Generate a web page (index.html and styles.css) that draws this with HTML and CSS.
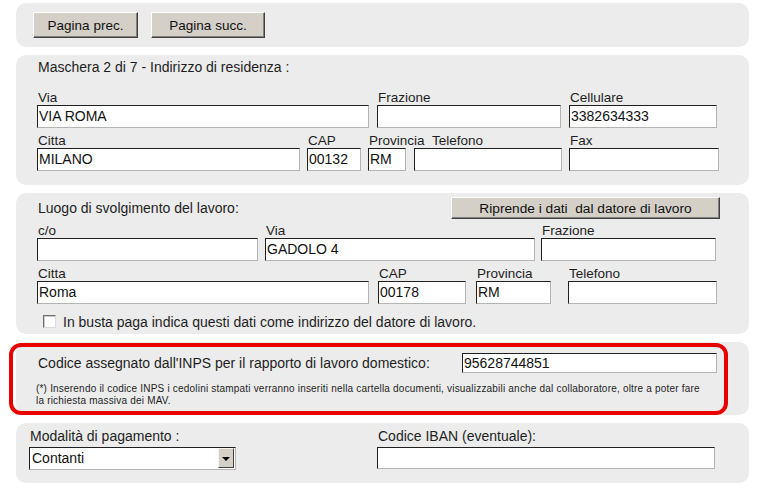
FILE: index.html
```
<!DOCTYPE html>
<html lang="it">
<head>
<meta charset="utf-8">
<title>Maschera 2 di 7 - Indirizzo di residenza</title>
<link rel="stylesheet" href="styles.css">
</head>
<body>
<div class="page">

  <div class="panel nav">
    <button class="btn btn-prev" type="button">Pagina prec.</button>
    <button class="btn btn-next" type="button">Pagina succ.</button>
  </div>

  <div class="panel res">
    <div class="title">Maschera 2 di 7 - Indirizzo di residenza :</div>
    <div class="row">
      <div class="field r-via"><span class="lbl">Via</span><div class="inp">VIA ROMA</div></div>
      <div class="field r-fraz"><span class="lbl">Frazione</span><div class="inp"></div></div>
      <div class="field r-cell"><span class="lbl">Cellulare</span><div class="inp">3382634333</div></div>
    </div>
    <div class="row">
      <div class="field r-citta"><span class="lbl">Citta</span><div class="inp">MILANO</div></div>
      <div class="field r-cap"><span class="lbl">CAP</span><div class="inp">00132</div></div>
      <div class="field r-prov"><span class="lbl nowrap">Provincia</span><div class="inp">RM</div></div>
      <div class="field r-tel"><span class="lbl shift">Telefono</span><div class="inp"></div></div>
      <div class="field r-fax"><span class="lbl">Fax</span><div class="inp"></div></div>
    </div>
  </div>

  <div class="panel work">
    <div class="head">
      <div class="title">Luogo di svolgimento del lavoro:</div>
      <button class="btn btn-copy" type="button">Riprende i dati  dal datore di lavoro</button>
    </div>
    <div class="row">
      <div class="field w-co"><span class="lbl">c/o</span><div class="inp"></div></div>
      <div class="field w-via"><span class="lbl">Via</span><div class="inp">GADOLO 4</div></div>
      <div class="field w-fraz"><span class="lbl">Frazione</span><div class="inp"></div></div>
    </div>
    <div class="row">
      <div class="field w-citta"><span class="lbl">Citta</span><div class="inp">Roma</div></div>
      <div class="field w-cap"><span class="lbl">CAP</span><div class="inp">00178</div></div>
      <div class="field w-prov"><span class="lbl">Provincia</span><div class="inp">RM</div></div>
      <div class="field w-tel"><span class="lbl">Telefono</span><div class="inp"></div></div>
    </div>
    <label class="check"><span class="box"></span>In busta paga indica questi dati come indirizzo del datore di lavoro.</label>
  </div>

  <div class="panel inps">
    <div class="inps-row">
      <span class="inps-lbl">Codice assegnato dall'INPS per il rapporto di lavoro domestico:</span>
      <div class="inp inps-inp">95628744851</div>
    </div>
    <p class="note">(*) Inserendo il codice INPS i cedolini stampati verranno inseriti nella cartella documenti, visualizzabili anche dal collaboratore, oltre a poter fare la richiesta massiva dei MAV.</p>
    <span class="highlight"></span>
  </div>

  <div class="panel pay">
    <div class="field p-mod">
      <span class="lbl plbl">Modalità di pagamento :</span>
      <div class="select"><span class="sel-text">Contanti</span><span class="sel-btn"><span class="tri"></span></span></div>
    </div>
    <div class="field p-iban">
      <span class="lbl plbl">Codice IBAN (eventuale):</span>
      <div class="inp iban-inp"></div>
    </div>
  </div>

</div>
</body>
</html>
```

FILE: styles.css
```
html, body {
  margin: 0;
  padding: 0;
  background: #ffffff;
}

body {
  font-family: "Liberation Sans", Arial, sans-serif;
  color: #1e1e1e;
}

.page {
  display: flex;
  flex-direction: column;
  gap: 8px;
  width: 733px;
  padding: 3px 0 0 16px;
}

.panel {
  background: #ececec;
  border-radius: 10px;
  box-sizing: border-box;
}

/* buttons */
.btn {
  font-family: "Liberation Sans", Arial, sans-serif;
  font-size: 13.5px;
  color: #111;
  background: #d4d0c8;
  border: 1px solid;
  border-color: #ffffff #404040 #404040 #ffffff;
  box-shadow: inset -1px -1px 0 #808080;
  padding: 0;
  margin: 0;
  box-sizing: border-box;
  white-space: pre;
}

.nav {
  height: 44px;
  display: flex;
  gap: 13px;
  padding: 9px 0 0 17px;
}
.btn-prev { width: 105px; height: 26px; }
.btn-next { width: 114px; height: 26px; }

/* fields */
.title {
  font-size: 14px;
  line-height: 16px;
  padding-left: 1px;
}

.row {
  display: flex;
  margin-bottom: 5px;
}
.row:last-child { margin-bottom: 0; }

.field {
  display: flex;
  flex-direction: column;
  flex: none;
}

.lbl {
  font-size: 13.5px;
  line-height: 15px;
  height: 15px;
  padding-left: 1px;
  white-space: nowrap;
}
.shift { padding-left: 18px; }

.inp {
  height: 23px;
  box-sizing: border-box;
  background: #ffffff;
  border: 1px solid;
  border-color: #202020 #b4b4b4 #b4b4b4 #202020;
  font-size: 14px;
  line-height: 21px;
  padding: 0 1px;
  color: #111;
  white-space: nowrap;
  overflow: hidden;
}

/* residenza */
.res {
  height: 130px;
  padding: 4px 0 0 21px;
}
.res .title { margin-bottom: 15px; }
.r-via { width: 332px; }
.r-fraz { width: 184px; margin-left: 8px; }
.r-cell { width: 148px; margin-left: 8px; }
.r-citta { width: 263px; }
.r-cap { width: 54px; margin-left: 7px; }
.r-prov { width: 38px; margin-left: 7px; }
.r-tel { width: 148px; margin-left: 8px; }
.r-fax { width: 150px; margin-left: 7px; }

/* luogo di lavoro */
.work {
  height: 141px;
  padding: 4px 0 0 21px;
}
.head {
  display: flex;
  align-items: center;
  justify-content: space-between;
  width: 683px;
  height: 22px;
  margin-bottom: 4px;
}
.btn-copy { width: 269px; height: 22px; font-size: 13.7px; }
.w-co { width: 221px; }
.w-via { width: 270px; margin-left: 7px; }
.w-fraz { width: 175px; margin-left: 6px; }
.w-citta { width: 332px; }
.w-cap { width: 88px; margin-left: 9px; }
.w-prov { width: 75px; margin-left: 10px; }
.w-tel { width: 149px; margin-left: 17px; }

.check {
  display: flex;
  align-items: center;
  margin-top: 9px;
  padding-left: 6px;
  font-size: 14px;
  line-height: 18px;
}
.box {
  width: 13px;
  height: 13px;
  box-sizing: border-box;
  background: #ffffff;
  border: 1px solid;
  border-color: #707070 #dcdcdc #dcdcdc #707070;
  box-shadow: inset 1px 1px 0 #c8c8c8;
  margin-right: 7px;
  margin-top: -2px;
}

/* INPS */
.inps {
  position: relative;
  height: 73px;
  padding: 11px 0 0 21px;
}
.inps-row {
  display: flex;
  align-items: center;
  height: 20px;
}
.inps-lbl {
  font-size: 14px;
  line-height: 16px;
  width: 424px;
  padding-left: 1px;
}
.inps-inp {
  width: 255px;
  height: 20px;
  line-height: 18px;
}
.note {
  margin: 10px 0 0 -1px;
  width: 670px;
  font-size: 10px;
  line-height: 12px;
  letter-spacing: 0.2px;
}
.highlight {
  position: absolute;
  left: -7px;
  top: 1px;
  width: 719px;
  height: 72px;
  box-sizing: border-box;
  border: 4px solid #e80000;
  border-radius: 12px;
  pointer-events: none;
}

/* pagamento */
.pay {
  height: 60px;
  display: flex;
  padding: 5px 0 0 13px;
}
.plbl {
  font-size: 14px;
  line-height: 16px;
  height: 16px;
  margin-bottom: 3px;
}
.p-mod { width: 207px; }
.p-iban { width: 338px; margin-left: 141px; }
.p-iban .plbl { padding-left: 1px; }

.select {
  display: flex;
  align-items: stretch;
  height: 23px;
  box-sizing: border-box;
  background: #ffffff;
  border: 1px solid;
  border-color: #202020 #b4b4b4 #b4b4b4 #202020;
}
.sel-text {
  flex: 1;
  font-size: 14px;
  line-height: 21px;
  padding-left: 2px;
  color: #111;
}
.sel-btn {
  width: 16px;
  margin: 0 1px 1px 0;
  box-sizing: border-box;
  background: #d4d0c8;
  border: 1px solid;
  border-color: #f4f4f4 #404040 #404040 #f4f4f4;
  display: flex;
  align-items: center;
  justify-content: center;
}
.tri {
  width: 0;
  height: 0;
  border-left: 4px solid transparent;
  border-right: 4px solid transparent;
  border-top: 4px solid #000;
  margin-top: 1px;
}
.iban-inp { height: 22px; }
```
